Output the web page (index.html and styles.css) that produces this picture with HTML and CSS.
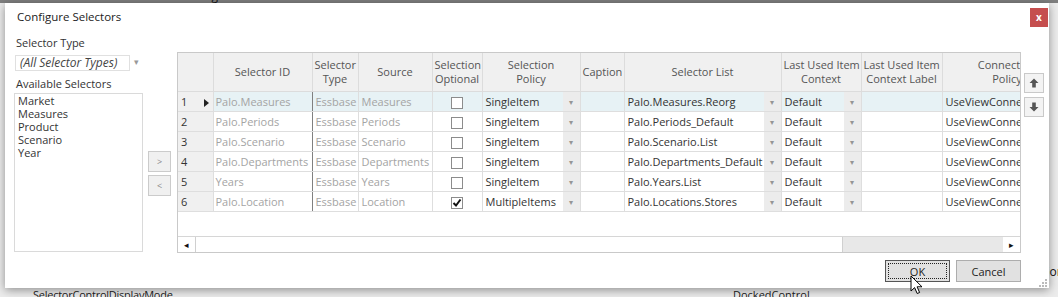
FILE: index.html
```html
<!DOCTYPE html>
<html lang="en">
<head>
  <meta charset="UTF-8" />
  <title>Configure Selectors</title>
  <link rel="stylesheet" href="styles.css">
</head>
<body>
  <!-- application behind the dialog -->
  <div class="desk">
    <div class="desk-top"><span class="desk-top-text">Measures &nbsp;&nbsp;&nbsp; Palo.Measures.Reorg</span></div>
    <div class="desk-mid"><span class="desk-io">ion</span></div>
    <div class="desk-bottom">
      <span class="prop-name">SelectorControlDisplayMode</span>
      <span class="prop-value">DockedControl</span>
    </div>
  </div>

  <div class="dialog">
    <div class="titlebar">
      <span class="title">Configure Selectors</span>
      <button class="close">x</button>
    </div>

    <div class="main">
      <div class="left">
        <div class="lbl">Selector Type</div>
        <div class="combo">
          <span class="combo-text">(All Selector Types)</span>
          <span class="combo-btn">&#9662;</span>
        </div>
        <div class="lbl lbl2">Available Selectors</div>
        <div class="list">
          <div>Market</div>
          <div>Measures</div>
          <div>Product</div>
          <div>Scenario</div>
          <div>Year</div>
        </div>
      </div>

      <div class="mover">
        <button class="mv">&gt;</button>
        <button class="mv">&lt;</button>
      </div>

      <div class="grid">
        <div class="grid-body">
          <table>
            <colgroup>
              <col style="width:35px"><col style="width:99px"><col style="width:46px"><col style="width:74px">
              <col style="width:50px"><col style="width:98px"><col style="width:44px"><col style="width:157px">
              <col style="width:80px"><col style="width:81px"><col style="width:130px">
            </colgroup>
            <thead>
              <tr>
                <th></th>
                <th>Selector ID</th>
                <th>Selector<br>Type</th>
                <th>Source</th>
                <th>Selection<br>Optional</th>
                <th>Selection<br>Policy</th>
                <th>Caption</th>
                <th>Selector List</th>
                <th>Last Used Item<br>Context</th>
                <th>Last Used Item<br>Context Label</th>
                <th>Connection<br>Policy</th>
              </tr>
            </thead>
            <tbody>
              <tr class="sel">
                <td class="rh">1<span class="cur"></span></td>
                <td class="ro sid">Palo.Measures</td>
                <td class="ro">Essbase</td>
                <td class="ro">Measures</td>
                <td class="chk"><span class="box"></span></td>
                <td class="dd"><div class="ddw"><span class="t">SingleItem</span><span class="btn">&#9662;</span></div></td>
                <td></td>
                <td class="dd"><div class="ddw"><span class="t">Palo.Measures.Reorg</span><span class="btn">&#9662;</span></div></td>
                <td class="dd"><div class="ddw"><span class="t">Default</span><span class="btn">&#9662;</span></div></td>
                <td></td>
                <td>UseViewConnection</td>
              </tr>
              <tr>
                <td class="rh">2</td>
                <td class="ro sid">Palo.Periods</td>
                <td class="ro">Essbase</td>
                <td class="ro">Periods</td>
                <td class="chk"><span class="box"></span></td>
                <td class="dd"><div class="ddw"><span class="t">SingleItem</span><span class="btn">&#9662;</span></div></td>
                <td></td>
                <td class="dd"><div class="ddw"><span class="t">Palo.Periods_Default</span><span class="btn">&#9662;</span></div></td>
                <td class="dd"><div class="ddw"><span class="t">Default</span><span class="btn">&#9662;</span></div></td>
                <td></td>
                <td>UseViewConnection</td>
              </tr>
              <tr>
                <td class="rh">3</td>
                <td class="ro sid">Palo.Scenario</td>
                <td class="ro">Essbase</td>
                <td class="ro">Scenario</td>
                <td class="chk"><span class="box"></span></td>
                <td class="dd"><div class="ddw"><span class="t">SingleItem</span><span class="btn">&#9662;</span></div></td>
                <td></td>
                <td class="dd"><div class="ddw"><span class="t">Palo.Scenario.List</span><span class="btn">&#9662;</span></div></td>
                <td class="dd"><div class="ddw"><span class="t">Default</span><span class="btn">&#9662;</span></div></td>
                <td></td>
                <td>UseViewConnection</td>
              </tr>
              <tr>
                <td class="rh">4</td>
                <td class="ro sid">Palo.Departments</td>
                <td class="ro">Essbase</td>
                <td class="ro">Departments</td>
                <td class="chk"><span class="box"></span></td>
                <td class="dd"><div class="ddw"><span class="t">SingleItem</span><span class="btn">&#9662;</span></div></td>
                <td></td>
                <td class="dd"><div class="ddw"><span class="t">Palo.Departments_Default</span><span class="btn">&#9662;</span></div></td>
                <td class="dd"><div class="ddw"><span class="t">Default</span><span class="btn">&#9662;</span></div></td>
                <td></td>
                <td>UseViewConnection</td>
              </tr>
              <tr>
                <td class="rh">5</td>
                <td class="ro sid">Years</td>
                <td class="ro">Essbase</td>
                <td class="ro">Years</td>
                <td class="chk"><span class="box"></span></td>
                <td class="dd"><div class="ddw"><span class="t">SingleItem</span><span class="btn">&#9662;</span></div></td>
                <td></td>
                <td class="dd"><div class="ddw"><span class="t">Palo.Years.List</span><span class="btn">&#9662;</span></div></td>
                <td class="dd"><div class="ddw"><span class="t">Default</span><span class="btn">&#9662;</span></div></td>
                <td></td>
                <td>UseViewConnection</td>
              </tr>
              <tr>
                <td class="rh">6</td>
                <td class="ro sid">Palo.Location</td>
                <td class="ro">Essbase</td>
                <td class="ro">Location</td>
                <td class="chk">
                  <span class="box on">
                    <svg width="10" height="10" viewBox="0 0 10 10"><path d="M1.5 5 L4 7.5 L8.5 1.5" fill="none" stroke="#111" stroke-width="2"/></svg>
                  </span>
                </td>
                <td class="dd"><div class="ddw"><span class="t">MultipleItems</span><span class="btn">&#9662;</span></div></td>
                <td></td>
                <td class="dd"><div class="ddw"><span class="t">Palo.Locations.Stores</span><span class="btn">&#9662;</span></div></td>
                <td class="dd"><div class="ddw"><span class="t">Default</span><span class="btn">&#9662;</span></div></td>
                <td></td>
                <td>UseViewConnection</td>
              </tr>
            </tbody>
          </table>
        </div>
        <div class="hscroll">
          <span class="sb-btn">&#9666;</span>
          <span class="sb-thumb"></span>
          <span class="sb-track"></span>
          <span class="sb-btn">&#9656;</span>
        </div>
      </div>

      <div class="side">
        <button class="sbtn">
          <svg width="10" height="10" viewBox="0 0 10 10"><path d="M5 0.5 L9.5 5 H6.8 V9.5 H3.2 V5 H0.5 Z" fill="#555"/></svg>
        </button>
        <button class="sbtn">
          <svg width="10" height="10" viewBox="0 0 10 10"><path d="M5 9.5 L9.5 5 H6.8 V0.5 H3.2 V5 H0.5 Z" fill="#555"/></svg>
        </button>
      </div>
    </div>

    <div class="footer">
      <button class="btn-ok"><span class="focus">OK</span></button>
      <button class="btn-cancel">Cancel</button>
    </div>

    <svg class="grip" width="8" height="8" viewBox="0 0 8 8">
      <rect x="6" y="0" width="2" height="2" fill="#bbb"/>
      <rect x="3" y="3" width="2" height="2" fill="#bbb"/>
      <rect x="6" y="3" width="2" height="2" fill="#bbb"/>
      <rect x="0" y="6" width="2" height="2" fill="#bbb"/>
      <rect x="3" y="6" width="2" height="2" fill="#bbb"/>
      <rect x="6" y="6" width="2" height="2" fill="#bbb"/>
    </svg>
  </div>

  <!-- mouse pointer over OK -->
  <svg class="pointer" width="14" height="20" viewBox="0 0 14 20">
    <path d="M1 1 L1 16 L4.6 12.6 L7.2 18.5 L9.6 17.5 L7.1 11.8 L12 11.8 Z" fill="#fff" stroke="#000" stroke-width="1" stroke-linejoin="round"/>
  </svg>
</body>
</html>
```

FILE: styles.css
```css
* {
  box-sizing: border-box;
}

body {
  margin: 0;
  width: 1058px;
  height: 297px;
  overflow: hidden;
  position: relative;
  font-family: 'Open Sans', sans-serif;
  font-size: 11px;
  color: #333;
  background: #ececec;
}

button {
  font-family: inherit;
  font-size: 11px;
  margin: 0;
  padding: 0;
  cursor: default;
}

/* Application window behind the dialog */
.desk {
  height: 297px;
  display: flex;
  flex-direction: column;
}

.desk-top {
  height: 3px;
  background: #7f7f7f;
  overflow: hidden;
  padding-left: 30px;
}

.desk-top-text {
  display: block;
  margin-top: -11px;
  font-size: 12px;
  line-height: 14px;
  color: #111;
}

.desk-mid {
  flex: 1;
  display: flex;
  justify-content: flex-end;
  align-items: flex-end;
  padding-bottom: 7px;
}

.desk-io {
  font-size: 12px;
  line-height: 14px;
  color: #111;
  margin-right: -6px;
}

.desk-bottom {
  height: 11px;
  display: flex;
  font-size: 11px;
  line-height: 14px;
  color: #222;
  overflow: hidden;
  padding-top: 2px;
}

.prop-name {
  margin-left: 33px;
  width: 700px;
  letter-spacing: -0.25px;
}

/* Dialog window */
.dialog {
  position: absolute;
  left: 5px;
  top: 3px;
  width: 1044px;
  height: 285px;
  background: #fff;
  box-shadow: 0 2px 9px rgba(0, 0, 0, 0.4);
  display: flex;
  flex-direction: column;
}

.titlebar {
  height: 26px;
  display: flex;
  align-items: center;
  justify-content: space-between;
  padding-left: 12px;
}

.title {
  font-size: 11.5px;
  color: #222;
}

.close {
  align-self: flex-start;
  margin-top: 5px;
  margin-right: 1px;
  width: 18px;
  height: 19px;
  border: none;
  background: #c54e4e;
  color: #fff;
  font-size: 10px;
  font-weight: bold;
  line-height: 17px;
}

.main {
  display: flex;
  padding: 7px 0 0 9px;
}

/* Left panel */
.left {
  width: 129px;
}

.lbl {
  height: 14px;
  line-height: 14px;
  padding-left: 2px;
  color: #333;
}

.lbl2 {
  margin-top: 6px;
}

.combo {
  margin: 5px 0 0 1px;
  height: 16px;
  display: flex;
}

.combo-text {
  flex: 1;
  border: 1px solid #e0e0e0;
  font-style: italic;
  font-size: 12px;
  line-height: 14px;
  padding-left: 4px;
  color: #444;
  white-space: nowrap;
}

.combo-btn {
  width: 13px;
  text-align: center;
  color: #999;
  font-size: 9px;
  line-height: 14px;
}

.list {
  margin-top: 2px;
  height: 159px;
  border: 1px solid #dadada;
  padding: 0 3px;
  line-height: 13px;
  color: #333;
}

.mover {
  margin-left: 5px;
  width: 23px;
  padding-top: 115px;
  display: flex;
  flex-direction: column;
  gap: 3px;
}

.mv {
  height: 21px;
  border: 1px solid #cbcbcb;
  background: #f0f0f0;
  color: #888;
  font-size: 9px;
}

/* Data grid */
.grid {
  margin-left: 6px;
  margin-top: 16px;
  width: 844px;
  height: 201px;
  border: 1px solid #c9c9c9;
  display: flex;
  flex-direction: column;
}

.grid-body {
  height: 183px;
  overflow: hidden;
}

table {
  border-collapse: collapse;
  table-layout: fixed;
  width: 894px;
}

th {
  height: 38px;
  background: #f0f0f0;
  font-weight: normal;
  color: #555;
  line-height: 14px;
  border-right: 1px solid #dcdcdc;
  border-bottom: 1px solid #dcdcdc;
  padding: 0 2px;
  white-space: nowrap;
}

td {
  height: 20px;
  padding: 0 0 0 3px;
  border-right: 1px solid #dedede;
  border-bottom: 1px solid #dedede;
  white-space: nowrap;
  overflow: hidden;
  color: #333;
}

td.rh {
  background: #f0f0f0;
  padding-left: 3px;
}

.cur {
  display: inline-block;
  margin-left: 17px;
  width: 0;
  height: 0;
  border-top: 4px solid transparent;
  border-bottom: 4px solid transparent;
  border-left: 5px solid #222;
  vertical-align: -1px;
}

tr.sel td:not(.rh) {
  background: #e7f2f5;
}

td.ro {
  color: #a4a4a4;
}

td.sid {
  padding-left: 2px;
  border-right-color: #808080;
}

td.chk {
  text-align: center;
  padding: 0;
}

.box {
  display: inline-block;
  width: 12px;
  height: 12px;
  border: 1px solid #8c8c8c;
  background: #fff;
  vertical-align: middle;
}

.box.on svg {
  display: block;
}

td.dd {
  padding: 0;
}

.ddw {
  display: flex;
  height: 19px;
}

.ddw .t {
  flex: 1;
  padding-left: 3px;
  line-height: 19px;
  overflow: hidden;
}

.ddw .btn {
  width: 17px;
  background: #ececec;
  color: #959595;
  font-size: 8px;
  line-height: 19px;
  text-align: center;
}

/* Horizontal scroll bar */
.hscroll {
  height: 16px;
  border-top: 1px solid #d6d6d6;
  display: flex;
}

.sb-btn {
  width: 17px;
  text-align: center;
  font-size: 9px;
  line-height: 15px;
  color: #111;
}

.sb-thumb {
  width: 648px;
  border-left: 1px solid #d0d0d0;
  border-right: 1px solid #d0d0d0;
  background: #fff;
}

.sb-track {
  flex: 1;
  background: #e8e8e8;
}

/* Row move buttons */
.side {
  margin-left: 3px;
  padding-top: 37px;
  display: flex;
  flex-direction: column;
  gap: 4px;
}

.sbtn {
  width: 20px;
  height: 20px;
  border: 1px solid #c9c9c9;
  background: #f3f3f3;
  display: flex;
  align-items: center;
  justify-content: center;
}

/* OK / Cancel */
.footer {
  margin-top: auto;
  display: flex;
  justify-content: flex-end;
  gap: 6px;
  padding: 0 28px 6px 0;
}

.footer button {
  width: 65px;
  height: 22px;
  background: #e1e1e1;
  color: #222;
}

.btn-ok {
  border: 1px solid #555;
  padding: 2px;
}

.focus {
  display: block;
  height: 100%;
  border: 1px dotted #222;
  line-height: 15px;
}

.btn-cancel {
  border: 1px solid #adadad;
}

.grip {
  position: absolute;
  right: 2px;
  bottom: 1px;
}

.pointer {
  position: absolute;
  left: 910px;
  top: 275px;
}
```
